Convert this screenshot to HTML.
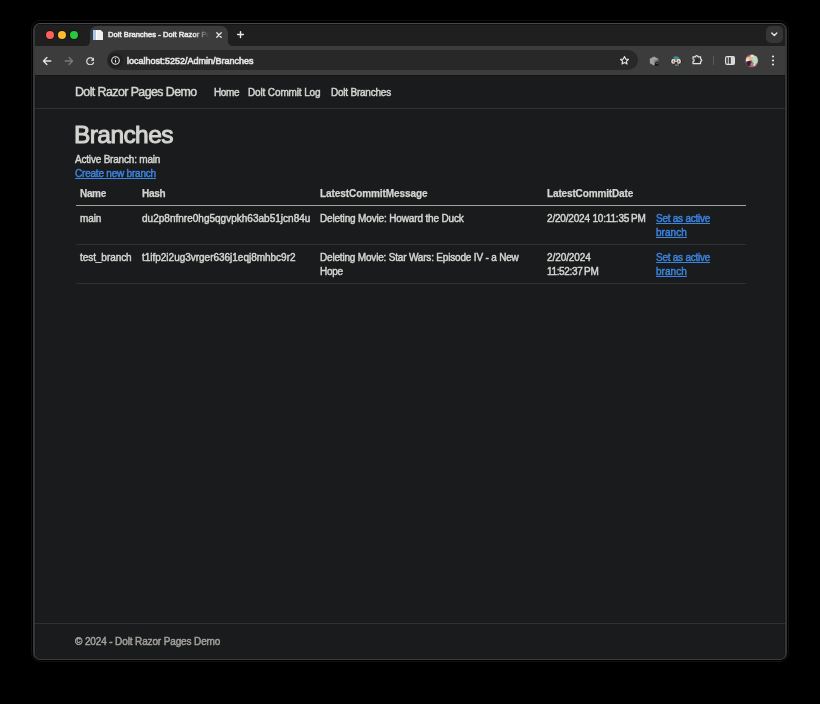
<!DOCTYPE html>
<html><head><meta charset="utf-8">
<style>
*{margin:0;padding:0;box-sizing:border-box}
html,body{width:820px;height:704px;background:#000;overflow:hidden}
body{font-family:"Liberation Sans",sans-serif;position:relative}
.abs{position:absolute}
#outline{left:31px;top:20px;width:758px;height:642px;border:1px solid #121212;border-radius:9px}
#win{left:33px;top:23px;width:754px;height:637px;border-style:solid;border-width:1px 2px;border-color:#474747 #363636 #3a3a3a #383838;border-radius:7px;overflow:hidden;background:#1f1f1f}
#strip{left:0;top:0;width:751px;height:22px;background:#1f1f1f;box-shadow:inset 0 1px 0 #131313}
.dot{position:absolute;width:8.2px;height:8.2px;border-radius:50%;top:6.75px;box-shadow:0 0 0 0.7px rgba(0,0,0,0.55)}
#tab{left:55px;top:1.8px;width:138px;height:20.2px;background:#3c3c3c;border-radius:7px 7px 0 0}
#toolbar{left:0;top:22px;width:751px;height:29px;background:#3c3c3c}
#omni{left:72.3px;top:4.3px;width:531.2px;height:19.8px;background:#282828;border-radius:9.9px}
#page{left:-1px;top:51px;width:752px;height:584px;background:#1a1b1c}
.t{position:absolute;white-space:nowrap;color:#d4d4d1;font-size:9.6px;line-height:14.4px;-webkit-text-stroke:0.6px currentColor;will-change:transform}
.b{font-weight:bold}
a,.lnk{color:#3b84e0;text-decoration:underline;text-underline-offset:0.5px;text-decoration-thickness:1px}
.hl{position:absolute;height:1px;background:#2f3031}
#ddbtn{left:731px;top:2.4px;width:16.6px;height:16.6px;border-radius:5px;background:#363636}
#tabtitle{left:18.3px;top:2.9px;font-size:7.5px;letter-spacing:0.08px;line-height:12px;color:#e3e3e3;width:101px;overflow:hidden;-webkit-mask-image:linear-gradient(90deg,#000 85%,transparent 100%)}
#url{left:20.1px;top:3.6px;font-size:9px;line-height:14px;color:#e3e3e3}
</style></head><body>
<div class="abs" id="outline"></div>
<div class="abs" id="win">
  <div class="abs" id="strip">
    <div class="dot" style="left:10.75px;background:#fe5f57"></div>
    <div class="dot" style="left:22.65px;background:#febc2e"></div>
    <div class="dot" style="left:34.75px;background:#28c840"></div>
    <div class="abs" id="ddbtn"><svg width="17" height="17" viewBox="0 0 17 17"><path d="M5.8 7 L8.3 9.4 L10.8 7" fill="none" stroke="#e3e3e3" stroke-width="1.4" stroke-linecap="round" stroke-linejoin="round"/></svg></div>
  </div>
  <div class="abs" id="tab">
    <svg class="abs" style="left:-5px;top:15.2px" width="5" height="5" viewBox="0 0 5 5"><path d="M0 5 Q5 5 5 0 L5 5 Z" fill="#3c3c3c"/></svg>
    <svg class="abs" style="left:138px;top:15.2px" width="5" height="5" viewBox="0 0 5 5"><path d="M5 5 Q0 5 0 0 L0 5 Z" fill="#3c3c3c"/></svg>
    <svg class="abs" style="left:2.8px;top:4.0px" width="10.4" height="10" viewBox="0 0 10.4 10"><path d="M0 0 H7.6 L10.4 2.6 V10 H0 Z" fill="#eef0f3"/><rect x="0" y="0" width="3" height="10" fill="#a9c8e8"/><rect x="3" y="0" width="1" height="10" fill="#ffffff"/></svg>
    <div class="t" id="tabtitle">Dolt Branches - Dolt Razor Pages</div>
    <svg class="abs" style="left:124.5px;top:4.9px" width="8" height="8" viewBox="0 0 8 8"><path d="M1.8 1.8 L6.2 6.2 M6.2 1.8 L1.8 6.2" stroke="#e8e8e8" stroke-width="1.3" stroke-linecap="round"/></svg>
  </div>
  <svg class="abs" style="left:200.5px;top:6.2px" width="9" height="9" viewBox="0 0 9 9"><path d="M4.5 1.6 V7.4 M1.6 4.5 H7.4" stroke="#e8e8e8" stroke-width="1.45" stroke-linecap="round"/></svg>
  <div class="abs" id="toolbar">
    <svg class="abs" style="left:7.2px;top:9.8px" width="10" height="10" viewBox="0 0 10 10"><path d="M8.8 5 H1.4 M4.9 1.5 L1.4 5 L4.9 8.5" fill="none" stroke="#e3e3e3" stroke-width="1.3" stroke-linecap="round" stroke-linejoin="round"/></svg>
    <svg class="abs" style="left:29.2px;top:9.8px" width="10" height="10" viewBox="0 0 10 10"><path d="M1.2 5 H8.6 M5.1 1.5 L8.6 5 L5.1 8.5" fill="none" stroke="#7a7a7a" stroke-width="1.3" stroke-linecap="round" stroke-linejoin="round"/></svg>
    <svg class="abs" style="left:50.9px;top:10.6px" width="8.6" height="8.6" viewBox="3.6 3.6 16.8 16.8"><path d="M17.65 6.35C16.2 4.9 14.21 4 12 4c-4.42 0-7.99 3.58-7.99 8s3.57 8 7.99 8c3.73 0 6.84-2.55 7.73-6h-2.08c-.82 2.33-3.04 4-5.65 4-3.31 0-6-2.69-6-6s2.69-6 6-6c1.66 0 3.14.69 4.22 1.78L13 11h7V4l-2.35 2.35z" fill="#e3e3e3" stroke="#e3e3e3" stroke-width="0.4"/></svg>
    <div class="abs" id="omni">
      <div class="abs" style="left:0.7px;top:2.5px;width:15px;height:15px;border-radius:50%;background:#1f1f1f"></div>
      <svg class="abs" style="left:3.7px;top:5.5px" width="9" height="9" viewBox="0 0 9 9"><circle cx="4.5" cy="4.5" r="3.8" fill="none" stroke="#e3e3e3" stroke-width="1.1"/><path d="M4.5 4 V6.6" stroke="#e3e3e3" stroke-width="1.1"/><circle cx="4.5" cy="2.6" r="0.6" fill="#e3e3e3"/></svg>
      <div class="t" id="url">localhost:5252/Admin/Branches</div>
      <svg class="abs" style="left:511.6px;top:4.9px" width="11" height="11" viewBox="0 0 24 24"><path d="M12 3.2 L14.6 8.9 L20.8 9.5 L16.1 13.6 L17.5 19.7 L12 16.5 L6.5 19.7 L7.9 13.6 L3.2 9.5 L9.4 8.9 Z" fill="none" stroke="#e3e3e3" stroke-width="2.4" stroke-linejoin="round"/></svg>
    </div>
    <svg class="abs" style="left:614.3px;top:9.6px" width="10" height="10" viewBox="0 0 10 10"><path d="M5 0.4 L9.2 2.7 V7.3 L5 9.6 L0.8 7.3 V2.7 Z" fill="#a0a0a0"/><path d="M5 4.8 L9.2 2.7 V7.3 L5 9.6 Z" fill="#7a7a7a"/><path d="M9.4 5.2 Q6.2 5 6 8 L5.6 9.8 L9.4 9.8 Z" fill="#161616"/><path d="M7.4 7.3 Q8.2 6.6 8.8 7.4" stroke="#bbb" stroke-width="0.7" fill="none"/></svg>
    <svg class="abs" style="left:634.8px;top:8.5px" width="12" height="12" viewBox="0 0 12 12"><path d="M2.3 5 Q2.5 1.2 6 1.2 Q9.6 1.2 9.8 5 Z" fill="#3d8a93"/><path d="M2.6 3.6 L4.2 3.3 L3.6 4.2 Z" fill="#111"/><rect x="0.4" y="5.2" width="1" height="2.4" fill="#151515"/><rect x="10.6" y="5.2" width="1" height="2.4" fill="#151515"/><circle cx="3.5" cy="6.4" r="2.3" fill="#e9e3dc"/><circle cx="8.6" cy="6.4" r="2.3" fill="#e9e3dc"/><ellipse cx="3.5" cy="6.4" rx="0.8" ry="1.2" fill="#a8584a"/><ellipse cx="8.6" cy="6.4" rx="0.8" ry="1.2" fill="#a8584a"/><path d="M4.6 7.6 Q6 6.9 7.5 7.6 L7.2 8.6 Q6 8.2 4.9 8.6 Z" fill="#111"/><rect x="4.7" y="9.6" width="4.3" height="1" fill="#8a9a9a"/><circle cx="4.2" cy="10" r="0.6" fill="#111"/><circle cx="9.4" cy="10" r="0.6" fill="#111"/></svg>
    <svg class="abs" style="left:657.3px;top:9px" width="11" height="10" viewBox="0 0 11 10"><path d="M1 1.8 H3.5 A1.2 1.2 0 0 1 5.9 1.8 H8.6 V4 A1.2 1.2 0 0 1 8.6 6.4 V8.6 H1 V6.4 A1.2 1.2 0 0 0 1 4 Z" fill="none" stroke="#e3e3e3" stroke-width="1.15" stroke-linejoin="round"/><rect x="3.2" y="3.8" width="3.2" height="3" fill="#2a2a2a"/></svg>
    <div class="abs" style="left:678.4px;top:10px;width:1px;height:9px;background:#5a5a5a"></div>
    <svg class="abs" style="left:690.1px;top:10.1px" width="10" height="9" viewBox="0 0 10 9"><rect x="0.6" y="0.6" width="8.8" height="7.8" rx="1.6" fill="none" stroke="#e3e3e3" stroke-width="1.15"/><rect x="5.8" y="0.6" width="3.6" height="7.8" fill="#d8d8d8"/><path d="M3.3 1 V8" stroke="#e3e3e3" stroke-width="0.9"/></svg>
    <svg class="abs" style="left:709.5px;top:8px" width="14" height="14" viewBox="0 0 14 14"><defs><clipPath id="avc"><circle cx="6.8" cy="6.8" r="6.5"/></clipPath><filter id="avb"><feGaussianBlur stdDeviation="0.6"/></filter></defs><g clip-path="url(#avc)"><rect width="14" height="14" fill="#9a6a68"/><g filter="url(#avb)"><ellipse cx="4.5" cy="4.5" rx="3.5" ry="2" fill="#e8b88a"/><ellipse cx="2.5" cy="6" rx="1.8" ry="1.5" fill="#e8e0e8"/><ellipse cx="10" cy="6" rx="2.8" ry="4" fill="#b8e0c0"/><ellipse cx="4" cy="9.5" rx="2.6" ry="2.4" fill="#3a1f35"/><ellipse cx="7.5" cy="10.5" rx="2.2" ry="2" fill="#b07a78"/><ellipse cx="9.5" cy="10.5" rx="1" ry="1.5" fill="#e0e0e0"/><ellipse cx="7.2" cy="2" rx="1.8" ry="1.2" fill="#e8e8e8"/></g></g></svg>
    <svg class="abs" style="left:735px;top:8px" width="6" height="13" viewBox="0 0 6 13"><circle cx="3" cy="2.5" r="1.1" fill="#e3e3e3"/><circle cx="3" cy="6.5" r="1.1" fill="#e3e3e3"/><circle cx="3" cy="10.5" r="1.1" fill="#e3e3e3"/></svg>
  </div>
  <div class="abs" id="page"><div class="abs" style="left:0;top:0;width:752px;height:1px;background:#141516"></div><div class="abs" style="left:1px;top:0;width:1px;height:584px;background:#151616"></div><div class="abs" style="left:750px;top:0;width:1px;height:584px;background:#151616"></div>
    <div class="hl" style="left:0;top:33px;width:752px"></div>
    <div class="hl" style="left:42px;top:130px;width:670px;height:1px;background:#a2a2a0"></div>
    <div class="hl" style="left:42px;top:169px;width:670px"></div>
    <div class="hl" style="left:42px;top:208px;width:670px"></div>
    <div class="hl" style="left:0;top:548px;width:752px"></div>
    <div class="t" id="tx0" style="left:40.68px;top:8.00px;letter-spacing:-0.575px;font-size:12.4px;line-height:18px;-webkit-text-stroke:0.45px currentColor">Dolt Razor Pages Demo</div>
    <div class="t" id="tx1" style="left:179.72px;top:10.81px;letter-spacing:-0.404px;font-size:10.0px;-webkit-text-stroke:0.45px currentColor">Home</div>
    <div class="t" id="tx2" style="left:214.27px;top:10.81px;letter-spacing:-0.138px;font-size:10.0px;-webkit-text-stroke:0.45px currentColor">Dolt Commit Log</div>
    <div class="t" id="tx3" style="left:297.25px;top:10.81px;letter-spacing:-0.221px;font-size:10.0px;-webkit-text-stroke:0.45px currentColor">Dolt Branches</div>
    <div class="t" id="tx4" style="left:40.18px;top:45.61px;letter-spacing:-0.583px;font-size:24.5px;line-height:28.8px;-webkit-text-stroke:1.0px currentColor">Branches</div>
    <div class="t" id="tx5" style="left:41.44px;top:78.20px;letter-spacing:-0.195px;font-size:10.0px;-webkit-text-stroke:0.45px currentColor">Active Branch: main</div>
    <div class="t lnk" id="tx6" style="left:40.90px;top:92.40px;letter-spacing:-0.209px;font-size:10.0px;-webkit-text-stroke:0.45px currentColor">Create new branch</div>
    <div class="t b" id="tx7" style="left:46.10px;top:111.81px;letter-spacing:-0.331px;font-size:10.0px;-webkit-text-stroke:0.25px currentColor">Name</div>
    <div class="t b" id="tx8" style="left:108.36px;top:111.81px;letter-spacing:-0.293px;font-size:10.0px;-webkit-text-stroke:0.25px currentColor">Hash</div>
    <div class="t b" id="tx9" style="left:286.43px;top:111.82px;letter-spacing:-0.076px;font-size:10.0px;-webkit-text-stroke:0.25px currentColor">LatestCommitMessage</div>
    <div class="t b" id="tx10" style="left:512.96px;top:111.81px;letter-spacing:-0.140px;font-size:10.0px;-webkit-text-stroke:0.25px currentColor">LatestCommitDate</div>
    <div class="t" id="tx11" style="left:45.75px;top:136.60px;letter-spacing:-0.113px;font-size:10.0px;-webkit-text-stroke:0.45px currentColor">main</div>
    <div class="t" id="tx12" style="left:108.33px;top:136.60px;letter-spacing:0.014px;font-size:10.0px;-webkit-text-stroke:0.45px currentColor">du2p8nfnre0hg5qgvpkh63ab51jcn84u</div>
    <div class="t" id="tx13" style="left:286.47px;top:136.60px;letter-spacing:-0.151px;font-size:10.0px;-webkit-text-stroke:0.45px currentColor">Deleting Movie: Howard the Duck</div>
    <div class="t" id="tx14" style="left:513.40px;top:136.61px;letter-spacing:-0.184px;font-size:10.0px;-webkit-text-stroke:0.45px currentColor">2/20/2024 10:11:35 PM</div>
    <div class="t lnk" id="tx15" style="left:621.80px;top:136.60px;letter-spacing:-0.249px;font-size:10.0px;-webkit-text-stroke:0.45px currentColor">Set as active</div>
    <div class="t lnk" id="tx16" style="left:621.80px;top:151.00px;letter-spacing:0.054px;font-size:10.0px;-webkit-text-stroke:0.45px currentColor">branch</div>
    <div class="t" id="tx17" style="left:46.07px;top:175.70px;letter-spacing:-0.061px;font-size:10.0px;-webkit-text-stroke:0.45px currentColor">test_branch</div>
    <div class="t" id="tx18" style="left:107.82px;top:175.71px;letter-spacing:-0.015px;font-size:10.0px;-webkit-text-stroke:0.45px currentColor">t1ifp2i2ug3vrger636j1eqj8mhbc9r2</div>
    <div class="t" id="tx19" style="left:286.18px;top:175.70px;letter-spacing:-0.184px;font-size:10.0px;-webkit-text-stroke:0.45px currentColor">Deleting Movie: Star Wars: Episode IV - a New</div>
    <div class="t" id="tx20" style="left:286.38px;top:189.91px;letter-spacing:-0.282px;font-size:10.0px;-webkit-text-stroke:0.45px currentColor">Hope</div>
    <div class="t" id="tx21" style="left:513.11px;top:175.61px;letter-spacing:-0.074px;font-size:10.0px;-webkit-text-stroke:0.45px currentColor">2/20/2024</div>
    <div class="t" id="tx22" style="left:513.12px;top:189.90px;letter-spacing:-0.348px;font-size:10.0px;-webkit-text-stroke:0.45px currentColor">11:52:37 PM</div>
    <div class="t lnk" id="tx23" style="left:621.80px;top:175.71px;letter-spacing:-0.249px;font-size:10.0px;-webkit-text-stroke:0.45px currentColor">Set as active</div>
    <div class="t lnk" id="tx24" style="left:621.80px;top:190.00px;letter-spacing:0.050px;font-size:10.0px;-webkit-text-stroke:0.45px currentColor">branch</div>
    <div class="t" id="tx25" style="left:40.79px;top:560.31px;letter-spacing:-0.129px;font-size:10.0px;-webkit-text-stroke:0.45px currentColor;color:#a3a19c">© 2024 - Dolt Razor Pages Demo</div>
  </div>
</div>
</body></html>
